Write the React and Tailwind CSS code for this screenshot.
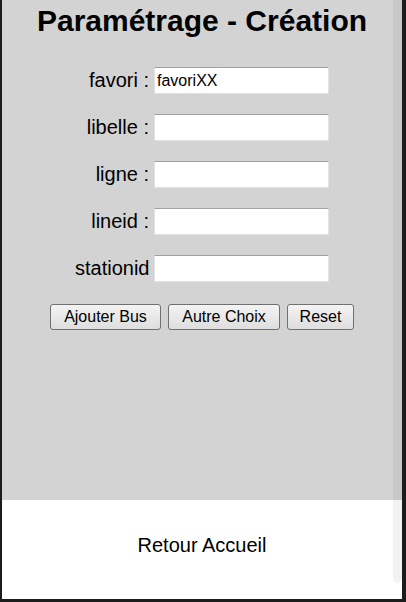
import React, { useState } from "react";

const champs = [
  { nom: "favori", label: "favori :" },
  { nom: "libelle", label: "libelle :" },
  { nom: "ligne", label: "ligne :" },
  { nom: "lineid", label: "lineid :" },
  { nom: "stationid", label: "stationid" },
];

const boutonClasse =
  "h-[26px] rounded-[3px] border border-[#707070] bg-gradient-to-b from-[#f4f4f4] to-[#dedede] text-[16px] leading-[24px] text-black";

function App() {
  const [valeurs, setValeurs] = useState({ favori: "favoriXX", libelle: "", ligne: "", lineid: "", stationid: "" });

  const reset = () => setValeurs({ favori: "", libelle: "", ligne: "", lineid: "", stationid: "" });

  return (
    <div
      className="relative h-[602px] w-[406px] overflow-hidden border-l-[2px] border-r-[4px] border-b-[3px] border-[#1c1c1c] bg-white"
      style={{ fontFamily: '"Liberation Sans", Arial, sans-serif' }}
    >
      {/* PARTIE GRISE */}
      <div className="flex h-[500px] flex-col items-center bg-[#d3d3d3] pt-[4px]">
        <h1 className="text-[30px] font-bold leading-[34px] text-black">Paramétrage - Création</h1>

        {/* FORMULAIRE */}
        <div className="mt-[29px] grid grid-cols-[74px_175px] items-center gap-x-[5px] gap-y-[20px]">
          {champs.map((c) => (
            <React.Fragment key={c.nom}>
              <label className="whitespace-nowrap text-right text-[20px] leading-[23px] text-black">{c.label}</label>
              <input
                type="text"
                value={valeurs[c.nom]}
                onChange={(e) => setValeurs({ ...valeurs, [c.nom]: e.target.value })}
                className="h-[27px] w-[175px] border border-[#e2e2e2] border-t-[#a0a0a0] bg-white px-[2px] text-[16px] text-black outline-none"
              />
            </React.Fragment>
          ))}
        </div>

        {/* BOUTONS */}
        <div className="mt-[22px] flex gap-[7px]">
          <button className={`${boutonClasse} w-[111px]`}>Ajouter Bus</button>
          <button className={`${boutonClasse} w-[112px]`}>Autre Choix</button>
          <button onClick={reset} className={`${boutonClasse} w-[67px]`}>
            Reset
          </button>
        </div>
      </div>

      {/* PIED */}
      <div className="flex h-[98px] justify-center pt-[34px]">
        <span className="text-[20px] leading-[23px] text-black">Retour Accueil</span>
      </div>

      {/* barre de défilement */}
      <div className="absolute right-0 top-0 h-[583px] w-[9px] rounded-b-[5px] bg-black/[0.05]" />
    </div>
  );
}

export default App;
